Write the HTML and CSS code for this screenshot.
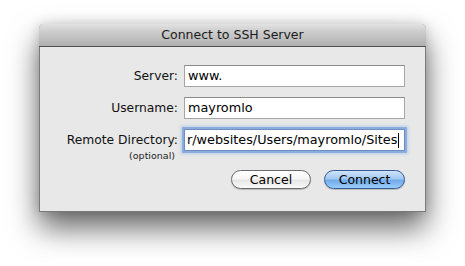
FILE: index.html
```html
<!DOCTYPE html>
<html>
<head>
<meta charset="utf-8">
<link rel="stylesheet" href="styles.css">
</head>
<body>
<div class="window">
  <div class="titlebar">Connect to SSH Server</div>
  <div class="content">
    <div class="form">
      <label class="label">Server:</label>
      <div class="field"><span class="value">www.</span></div>
      <label class="label">Username:</label>
      <div class="field"><span class="value">mayromlo</span></div>
      <div class="label label-stack"><span>Remote Directory:</span><span class="hint">(optional)</span></div>
      <div class="field focused"><span class="value">r/websites/Users/mayromlo/Sites</span><span class="caret"></span></div>
    </div>
    <div class="buttons">
      <button class="btn">Cancel</button>
      <button class="btn primary">Connect</button>
    </div>
  </div>
</div>
</body>
</html>
```

FILE: styles.css
```css
html, body {
  margin: 0;
  padding: 0;
  background: #ffffff;
}
body {
  font-family: "DejaVu Sans", "Liberation Sans", sans-serif;
  font-size: 12px;
  color: #000;
  width: 465px;
  height: 266px;
  overflow: hidden;
}
.window {
  margin: 24px 0 0 39px;
  width: 387px;
  height: 188px;
  box-sizing: border-box;
  background: #e8e8e8;
  border: 1px solid #7a7a7a;
  border-top: none;
  border-radius: 5px 5px 0 0;
  box-shadow: 0 16px 30px rgba(0,0,0,0.6), 0 0 12px rgba(0,0,0,0.15);
  display: flex;
  flex-direction: column;
}
.titlebar {
  height: 23px;
  box-sizing: border-box;
  border-radius: 5px 5px 0 0;
  margin: 0 -1px;
  background: linear-gradient(#e2e2e2 0%, #cfcfcf 30%, #b0b0b0 100%);
  border-bottom: 1px solid #505050;
  text-align: center;
  font-size: 12.5px;
  line-height: 22px;
  color: #1a1a1a;
}
.content {
  flex: 1;
  padding: 18px 20px 0 0;
  display: flex;
  flex-direction: column;
}
.form {
  display: grid;
  grid-template-columns: 1fr 221px;
  column-gap: 6px;
  row-gap: 10px;
  align-items: start;
}
.label {
  text-align: right;
  font-size: 12.3px;
  line-height: 22px;
  color: #111;
}
.label-stack {
  display: flex;
  flex-direction: column;
  align-items: flex-end;
}
.hint {
  font-size: 9.5px;
  line-height: 9px;
  margin-right: 3px;
  color: #222;
}
.field {
  height: 22px;
  box-sizing: border-box;
  background: #fff;
  border: 1px solid #a5a5a5;
  border-top-color: #8a8a8a;
  padding: 0 3px;
  font-size: 12.8px;
  line-height: 20px;
  white-space: nowrap;
  overflow: hidden;
  display: flex;
  align-items: center;
}
.field.focused {
  border-color: #6f8fc0;
  box-shadow: 0 0 0 2px rgba(120,160,220,0.75), 0 0 3px 3px rgba(140,180,230,0.5);
  padding-left: 2px;
}
.caret {
  display: inline-block;
  flex: none;
  width: 1px;
  height: 15px;
  background: #000;
  margin-left: 1px;
}
.buttons {
  display: flex;
  justify-content: flex-end;
  gap: 13px;
  margin-top: 10px;
}
.btn {
  font-family: "DejaVu Sans", "Liberation Sans", sans-serif;
  font-size: 12.5px;
  width: 80px;
  height: 19px;
  padding: 0;
  line-height: 17px;
  border-radius: 10px;
  border: 1px solid #6a6a6a;
  background: linear-gradient(#ffffff 0%, #f6f6f6 45%, #e6e6e6 55%, #fafafa 100%);
  box-shadow: 0 1px 1px rgba(0,0,0,0.2);
  color: #000;
}
.btn.primary {
  width: 81px;
  border-color: #355a94;
  background: linear-gradient(#cfe4fa 0%, #a2c9f2 45%, #72aaea 55%, #98cdfa 100%);
}
```
